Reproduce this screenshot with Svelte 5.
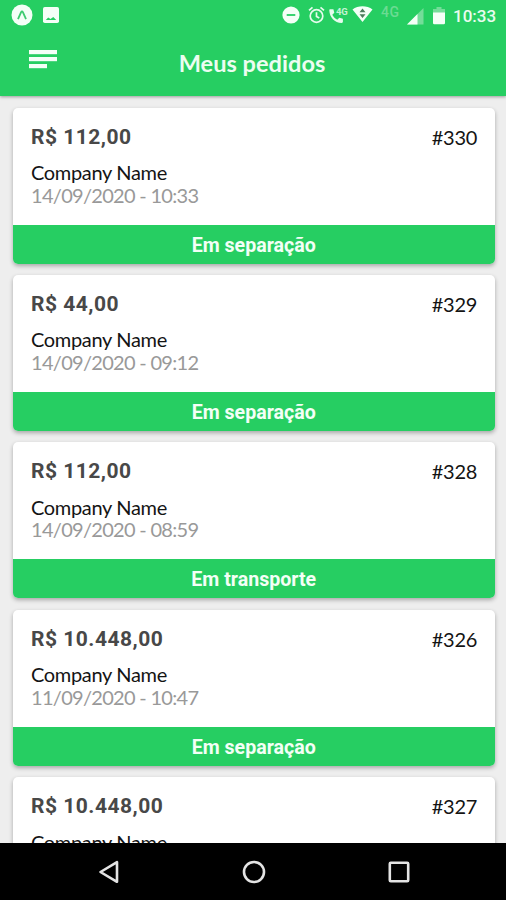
<script>
  const orders = [
    { id: 330, total: 'R$ 112,00', company: 'Company Name', date: '14/09/2020 - 10:33', status: 'Em separação' },
    { id: 329, total: 'R$ 44,00', company: 'Company Name', date: '14/09/2020 - 09:12', status: 'Em separação' },
    { id: 328, total: 'R$ 112,00', company: 'Company Name', date: '14/09/2020 - 08:59', status: 'Em transporte' },
    { id: 326, total: 'R$ 10.448,00', company: 'Company Name', date: '11/09/2020 - 10:47', status: 'Em separação' },
    { id: 327, total: 'R$ 10.448,00', company: 'Company Name' }
  ]
</script>

<div class="screen">
  <header>
    <div class="status-bar">
      <div class="notifications">
        <svg width="22" height="22" viewBox="0 0 22 22">
          <circle cx="11" cy="11" r="10.5" fill="#f4fff7" />
          <path d="M7 15.2 10 8.4q1-2 2 0L15 15.2" fill="none" stroke="#3ecb70" stroke-width="1.8" />
        </svg>
        <svg width="16" height="16" viewBox="0 0 16 16">
          <rect width="16" height="16" rx="1.8" fill="#f4fff7" />
          <path d="M2.8 13 5.2 10.6 7.5 12 10.3 10 13.2 13z" fill="#26ce62" />
        </svg>
      </div>
      <div class="system">
        <svg class="dnd" width="18" height="18" viewBox="0 0 18 18">
          <circle cx="9" cy="9" r="8.6" fill="#f4fff7" />
          <path d="M4.7 9h8.6" stroke="#26ce62" stroke-width="1.8" />
        </svg>
        <svg class="alarm" width="17" height="18" viewBox="0 0 17 18" fill="none" stroke="#e6fbed" stroke-width="1.7">
          <circle cx="8.5" cy="10" r="6.3" />
          <path d="M8.5 6.2v4.2l2.8 1.6M1 4.3l3.5-3M16 4.3l-3.5-3" />
        </svg>
        <svg class="call" width="19" height="18" viewBox="0 0 19 18">
          <path d="M1.2 3.2h3.2l.9 3.6-2 1.9c1.2 2.3 2.8 3.8 5 5l2-2 3.6 1v3.1c0 .7-.5 1.2-1.2 1.2C5.6 17 .5 11.3.3 4.3c0-.6.3-1.1.9-1.1z" fill="#e6fbed" />
          <text x="6.9" y="9.2">4G</text>
        </svg>
        <svg class="wifi" width="21" height="18" viewBox="0 0 21 18">
          <path d="M.5 4.5C6 .1 15 .1 20.5 4.5L10.5 17z" fill="#f4fff7" />
          <path d="M7.5 7.2h6l-3-3.8zM7.5 9.2h6l-3 3.8z" fill="#4b7c5c" />
        </svg>
        <span class="network">4G</span>
        <svg class="signal" width="17" height="17" viewBox="0 0 17 17">
          <path d="M0 16.5 16.5 0v16.5z" fill="#74dd99" />
          <path d="M0 16.5 10.5 6v10.5z" fill="#f4fff7" />
        </svg>
        <svg class="battery" width="12" height="18" viewBox="0 0 12 18">
          <path d="M3.5 0h5v2H12v4H0V2h3.5z" fill="#74dd99" />
          <path d="M0 5.5h12V16q0 1.2-1.2 1.2H1.2Q0 17.2 0 16z" fill="#f4fff7" />
        </svg>
        <span class="clock">10:33</span>
      </div>
    </div>
    <div class="toolbar">
      <button class="menu" aria-label="Menu">
        <svg width="28" height="19" viewBox="0 0 28 19" fill="#f4fff7">
          <rect width="28" height="4.2" />
          <rect y="7" width="28" height="4.2" />
          <rect y="14" width="18" height="4.2" />
        </svg>
      </button>
      <h1>Meus pedidos</h1>
    </div>
  </header>

  <main>
    {#each orders as order}
      <article class="card">
        <div class="card-body">
          <div class="summary">
            <span class="total">{order.total}</span>
            <span class="number">#{order.id}</span>
          </div>
          <div class="company">{order.company}</div>
          {#if order.date}
            <div class="date">{order.date}</div>
          {/if}
        </div>
        {#if order.status}
          <div class="card-status">{order.status}</div>
        {/if}
      </article>
    {/each}
  </main>

  <nav>
    <svg width="22" height="24" viewBox="0 0 22 24">
      <path d="M19 2.2v19.6L2.5 12z" />
    </svg>
    <svg width="24" height="24" viewBox="0 0 24 24">
      <circle cx="12" cy="12" r="10" />
    </svg>
    <svg width="22" height="22" viewBox="0 0 22 22">
      <rect x="1.8" y="1.8" width="18.4" height="18.4" rx="1" />
    </svg>
  </nav>
</div>

<style>
  :global(body) {
    margin: 0;
    overflow: hidden;
  }

  .screen {
    display: flex;
    flex-direction: column;
    height: 900px;
    background: #eeeeee;
    font-family: Lato, 'Liberation Sans', sans-serif;
    overflow: hidden;
  }

  header {
    height: 96px;
    flex-shrink: 0;
    background: #26ce62;
    box-shadow: 0 1px 3px rgba(0, 0, 0, 0.35);
    z-index: 1;
  }

  .status-bar {
    display: flex;
    justify-content: space-between;
    height: 30px;
    padding: 0 9px 0 11px;
  }

  .notifications,
  .system {
    display: flex;
    align-items: center;
  }

  .notifications {
    gap: 10px;
  }

  .dnd {
    margin-right: 8px;
  }

  .alarm {
    margin-right: 4px;
  }

  .call {
    margin-right: 4px;
  }

  .call text {
    font: 700 9.5px Roboto, sans-serif;
    fill: #c4f3d4;
  }

  .wifi {
    margin: 0 8px 3px 0;
  }

  .network {
    width: 26px;
    margin-bottom: 7px;
    font: 500 14px/16px Roboto, sans-serif;
    letter-spacing: 0.6px;
    color: #6bdb92;
  }

  .signal {
    margin-right: 9px;
    margin-top: 3px;
  }

  .battery {
    margin-right: 8px;
    margin-top: 1px;
  }

  .clock {
    width: 44px;
    margin-top: 2px;
    font: 500 17px/20px Roboto, sans-serif;
    color: #e9fcef;
    white-space: nowrap;
  }

  .toolbar {
    display: grid;
    grid-template-columns: 57px 1fr 59px;
    align-items: center;
    height: 65px;
  }

  .menu {
    display: flex;
    padding: 0 0 6px 29px;
    border: none;
    background: none;
  }

  h1 {
    margin: 0;
    text-align: center;
    font-size: 23.6px;
    font-weight: 700;
    line-height: 30px;
    color: #ecfdf1;
  }

  main {
    display: flex;
    flex-direction: column;
    gap: 11.4px;
    flex: 1;
    min-height: 0;
    padding: 11.6px 11px 0 12.5px;
    overflow: hidden;
  }

  .card {
    display: flex;
    flex-direction: column;
    flex-shrink: 0;
    height: 156px;
    border-radius: 5px;
    background: #fff;
    box-shadow: 0 2px 4px rgba(0, 0, 0, 0.3);
  }

  .card-body {
    flex: 1;
    padding: 16px 18px 0 18.5px;
  }

  .summary {
    display: flex;
    justify-content: space-between;
    height: 37.5px;
    line-height: 27px;
  }

  .total {
    font-family: Roboto, sans-serif;
    font-size: 21px;
    font-weight: 700;
    letter-spacing: 0.5px;
    color: #484848;
  }

  .number {
    font-size: 20px;
    letter-spacing: -0.3px;
    color: #141414;
  }

  .company,
  .date {
    font-size: 20px;
    line-height: 22.5px;
  }

  .company {
    letter-spacing: -0.33px;
    color: #141414;
  }

  .date {
    letter-spacing: -0.7px;
    color: #999;
  }

  .card-status {
    height: 39px;
    border-radius: 0 0 5px 5px;
    background: #26ce62;
    color: #f3fff6;
    text-align: center;
    font: 700 19.6px/41px Roboto, sans-serif;
  }

  nav {
    display: flex;
    align-items: center;
    justify-content: space-between;
    flex-shrink: 0;
    height: 57px;
    padding: 0 96px 0 97.5px;
    box-sizing: border-box;
    background: #000;
    z-index: 1;
  }

  nav svg {
    fill: none;
    stroke: #e4e4e4;
    stroke-width: 2.6;
    stroke-linejoin: round;
  }
</style>
